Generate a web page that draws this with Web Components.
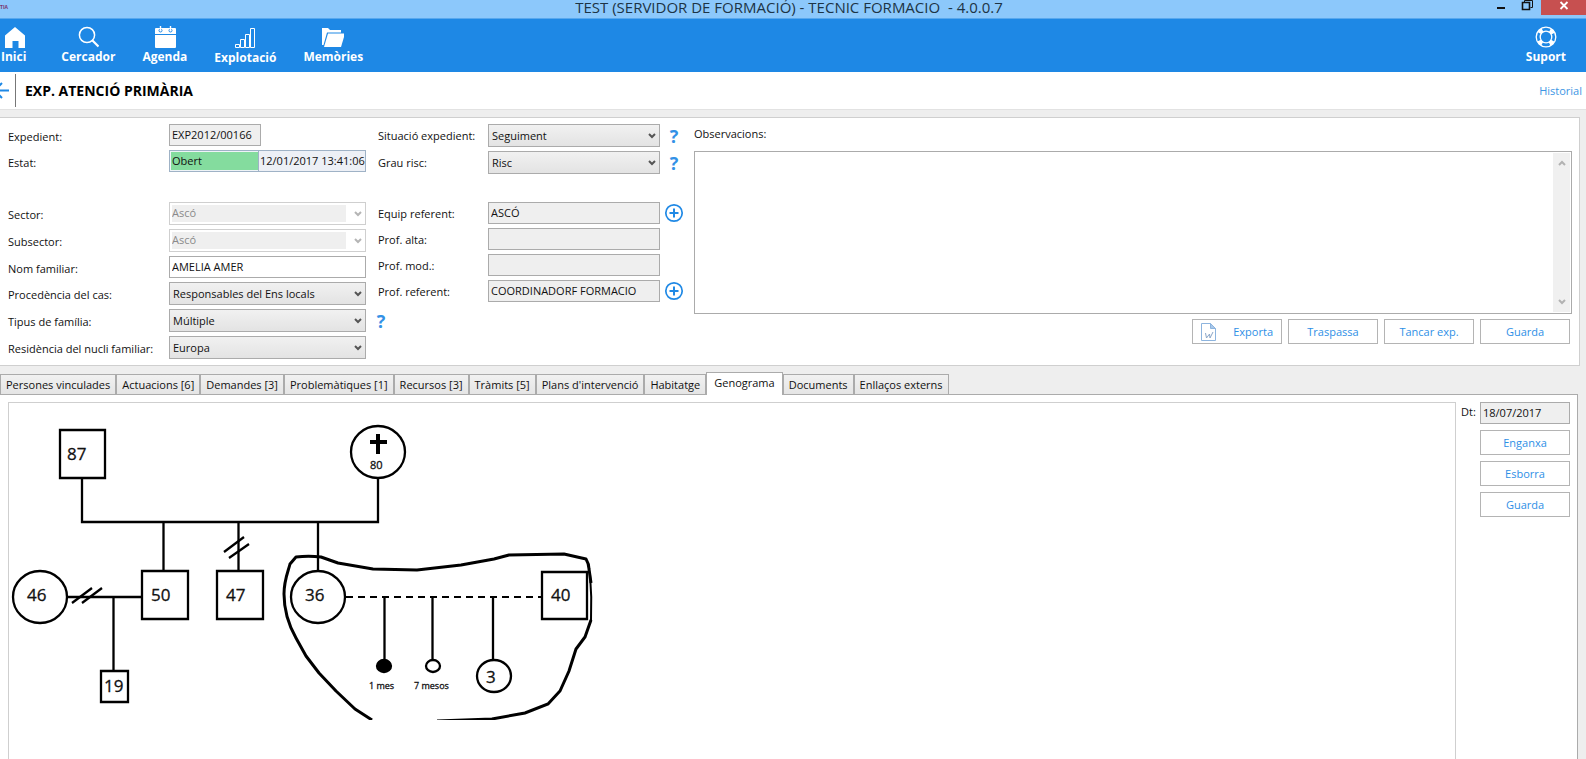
<!DOCTYPE html>
<html lang="ca">
<head>
<meta charset="utf-8">
<title>TECNIC FORMACIO</title>
<style>
  html, body { margin: 0; }
  body {
    --blue: #1e88e5;
    --line: #ababab;
    --soft: #cfcfcf;
    --fill: #efefef;
    font: 11px/16px "Open Sans", "Noto Sans", sans-serif;
    color: #111;
    background: #eee;
    overflow: hidden;
  }
</style>
</head>
<body>
<case-app></case-app>

<script>
const define = (name, html) => {
  const template = document.createElement('template');
  template.innerHTML = html;
  customElements.define(name, class extends HTMLElement {
    constructor() {
      super();
      this.attachShadow({ mode: 'open' }).append(template.content.cloneNode(true));
    }
  });
};

define('title-bar', `
<style>
  :host { display: grid; grid-template-columns: 106px 1fr 114px; height: 18px; background: #8cc8fb; border-bottom: 1px solid #58a8ee; color: #1d3445; }
  .mark { font-size: 5px; line-height: 14px; color: #7a3470; font-weight: 700; }
  .title { margin: 0; font: 400 15px/15px "Open Sans", sans-serif; text-align: center; white-space: pre; }
  .controls { display: flex; }
  button { border: 0; padding: 0; background: none; display: block; height: 15px; }
  svg { display: block; }
  .min { width: 34px; } .max { width: 35px; } .close { width: 45px; background: #c75050; }
</style>
<span class="mark">TIA</span>
<h1 class="title">TEST (SERVIDOR DE FORMACIÓ) - TECNIC FORMACIO  - 4.0.0.7</h1>
<div class="controls">
  <button class="min" aria-label="Minimitza"><svg width="34" height="15"><rect x="25" y="7" width="8" height="2" fill="#111"/></svg></button>
  <button class="max" aria-label="Restaura"><svg width="35" height="15" fill="none" stroke="#111"><path d="M18.500 2V.5h8v7h-2"/><path d="M16.500 2.500h7v7h-7z" stroke-width="1.600"/></svg></button>
  <button class="close" aria-label="Tanca"><svg width="45" height="15"><path d="M19.500 2l7 7M26.500 2l-7 7" stroke="#fff" stroke-width="1.800"/></svg></button>
</div>`);

define('tool-item', `
<style>
  :host { display: block; color: #fff; }
  a { display: flex; flex-direction: column; align-items: center; color: inherit; text-decoration: none; font-size: 12px; font-weight: 700; line-height: 16px; }
  ::slotted(svg) { display: block; width: 22px; height: 22px; margin-bottom: 1px; }
</style>
<a href="#"><slot name="icon"></slot><slot></slot></a>`);

define('tool-bar', `
<style>
  :host { display: flex; justify-content: space-between; height: 46px; padding: 7px 20px 0 1px; background: var(--blue); }
  nav { display: flex; gap: 27px; }
  .home { margin-right: 8px; }
  .chart { margin-top: 1px; }
</style>
<nav>
  <tool-item class="home"><svg slot="icon" viewBox="0 0 22 22"><path fill="#fff" d="M12 1 22 9.500V22h-6.500v-7h-6v7H2V9.500z"/></svg>Inici</tool-item>
  <tool-item><svg slot="icon" viewBox="0 0 22 22" fill="none" stroke="#fff"><circle cx="10" cy="9" r="7.600" stroke-width="1.500"/><path d="m15.500 14.500 6 6" stroke-width="2.200"/></svg>Cercador</tool-item>
  <tool-item><svg slot="icon" viewBox="0 0 22 22"><path fill="#fff" d="M2 2h19q1 0 1 1v5H1V3q0-1 1-1zM1 9h21v12q0 1-1 1H2q-1 0-1-1z"/><g fill="#fff" stroke="#1e88e5" stroke-width="1"><circle cx="6.500" cy="4.500" r="1.500"/><circle cx="16.500" cy="4.500" r="1.500"/></g><path d="M6.500 0v4.500M16.500 0v4.500" stroke="#fff" stroke-width="1.400"/></svg>Agenda</tool-item>
  <tool-item class="chart"><svg slot="icon" viewBox="0 0 22 22" fill="none" stroke="#fff" stroke-width="1"><path d="M1.500 17.500h4v3h-4zM6.500 12.500h4v8h-4zM11.500 7.500h4v13h-4zM16.500 1.500h4v19h-4z"/></svg>Explotació</tool-item>
  <tool-item><svg slot="icon" viewBox="0 0 22 22"><path fill="#fff" d="M0 2h6l2 2h11v2.500H5L1.500 19H0z"/><path fill="#fff" d="M6 7.500h17L19 21H2z"/></svg>Memòries</tool-item>
</nav>
<tool-item><svg slot="icon" viewBox="0 0 22 22" fill="none" stroke="#fff"><circle cx="11" cy="11" r="9.800" stroke-width="1.300"/><circle cx="11" cy="11" r="5.800" stroke-width="1.300"/><circle cx="11" cy="11" r="7.800" stroke-width="4" stroke-dasharray="4.500 7.750" stroke-dashoffset="-3.900"/></svg>Suport</tool-item>`);

define('page-header', `
<style>
  :host { display: flex; align-items: center; height: 37px; background: #fff; border-bottom: 1px solid #e2e2e2; }
  .back { display: block; border: 0; padding: 0; background: none; width: 15px; height: 33px; }
  svg { display: block; }
  h2 { flex: 1; margin: 0; border-left: 1px solid #777; padding-left: 9px; font: 700 14px/33px "Open Sans", sans-serif; color: #000; }
  a { color: #3d96e4; text-decoration: none; margin-right: 4px; }
</style>
<button class="back" aria-label="Enrere"><svg width="15" height="33" fill="none" stroke="#1e88e5" stroke-width="2"><path d="M9 16.500H-5M2 9l-7.500 7.500L2 24"/></svg></button>
<h2>EXP. ATENCIÓ PRIMÀRIA</h2>
<a href="#">Historial</a>`);

define('action-button', `
<style>
  :host { display: block; width: 90px; }
  button { box-sizing: border-box; display: flex; align-items: center; justify-content: center; width: 100%; height: 25px; padding: 0 8px; border: 1px solid #b4b4b4; background: #fff; color: #2e8fe6; font: inherit; }
  ::slotted(svg) { margin-right: auto; }
</style>
<button type="button"><slot name="icon"></slot><slot></slot></button>`);

define('help-button', `
<style>
  :host { display: block; }
  button { display: block; width: 14px; height: 22px; padding: 0; border: 0; background: none; color: #3391e6; font: 700 18px/24px "Open Sans", sans-serif; text-align: center; }
</style>
<button type="button" aria-label="Ajuda">?</button>`);

define('add-button', `
<style>
  :host { display: block; }
  button { display: block; width: 20px; height: 22px; padding: 0; border: 0; background: none; }
  svg { display: block; }
</style>
<button type="button" aria-label="Afegeix"><svg width="20" height="22" fill="none" stroke="#2089e5"><circle cx="10" cy="11" r="8.200" stroke-width="1.700"/><path d="M5.500 11h9M10 6.500v9" stroke-width="2"/></svg></button>`);

const chevron = '<svg width="8" height="6" fill="none" stroke="currentColor" stroke-width="2"><path d="m1 1 3 3 3-3"/></svg>';

define('case-form', `
<style>
  :host { display: flex; margin: 7px 6px 0 0; padding: 6px 7px 6px 8px; background: #fff; border: 1px solid var(--soft); border-left: 0; }
  form { display: contents; }
  .left, .mid { display: grid; align-items: start; flex: none; }
  .left { grid-template-columns: 161px 197px 12px; grid-template-rows: 26px 26px 26px 27px 27px 26px 27px 27px 23px; }
  .mid { grid-template-columns: 110px 172px 28px; grid-template-rows: 27px 51px 26px 26px 26px 22px; align-content: start; justify-items: start; margin-right: 6px; }
  .mid > help-button, .mid > add-button { justify-self: center; }
  label { padding-top: 5px; line-height: 16px; }
  .mid label { padding-top: 4px; }
  .gap { grid-column: 1 / -1; }
  input, select { box-sizing: border-box; display: block; width: 100%; margin: 0; padding: 0 2px 2px; height: 22px; border: 1px solid var(--line); border-radius: 0; background: var(--fill); color: #111; font: inherit; }
  select { appearance: none; padding: 0 3px; height: 23px; background: linear-gradient(#f1f1f1, #e3e3e3); }
  .pick { position: relative; width: 100%; }
  .pick svg { position: absolute; right: 4px; top: 9px; color: #555; }
  .short { width: 92px; }
  .plain { background: #fff; }
  .off select { color: #8a8a8a; opacity: 1; background: linear-gradient(var(--fill), var(--fill)) 2px 2px / 174px 17px no-repeat #fff; border-color: var(--soft); padding: 0 2px 2px; }
  .off svg { color: #b5b5b5; }
  .state { display: flex; box-sizing: border-box; height: 22px; border: 1px solid #9fb2c6; }
  .state input { height: 20px; }
  .state .open { flex: none; width: 88px; background: #84dc9e; border-color: #eef3f7; border-right: 0; padding: 0 1px 1px; }
  .state .date { flex: 1; min-width: 0; border: 0; border-left: 1px solid #9fb2c6; padding: 0 0 1px 1px; background: #edf0f6; }
  .help { margin-left: 8px; }
  .notes { flex: 1; display: flex; flex-direction: column; min-width: 0; }
  .notes label { height: 27px; box-sizing: border-box; padding-top: 2px; }
  .memo { display: flex; height: 161px; border: 1px solid var(--line); }
  textarea { flex: 1; border: 0; padding: 2px; margin: 0; resize: none; font: inherit; background: #fff; overflow: hidden; }
  .bar { display: flex; flex-direction: column; justify-content: space-between; align-items: center; width: 17px; box-sizing: border-box; padding: 7px 0; margin: 1px; background: #f0f0f0; color: #b2b2b2; }
  .actions { display: flex; justify-content: flex-end; gap: 6px; padding: 5px 2px 0 0; }
</style>
<form>
<div class="left">
  <label for="exp">Expedient:</label><input class="short" id="exp" value="EXP2012/00166" readonly><span></span>
  <label for="st">Estat:</label><div class="state"><input class="open" id="st" value="Obert" readonly><input class="date" aria-label="Data estat" value="12/01/2017 13:41:06" readonly></div><span></span>
  <div class="gap"></div>
  <label for="sec">Sector:</label><div class="pick off"><select id="sec" disabled><option>Ascó</option></select>${chevron}</div><span></span>
  <label for="sub">Subsector:</label><div class="pick off"><select id="sub" disabled><option>Ascó</option></select>${chevron}</div><span></span>
  <label for="nom">Nom familiar:</label><input class="plain" id="nom" value="AMELIA AMER"><span></span>
  <label for="pro">Procedència del cas:</label><div class="pick"><select id="pro"><option>Responsables del Ens locals</option></select>${chevron}</div><span></span>
  <label for="tip">Tipus de família:</label><div class="pick"><select id="tip"><option>Múltiple</option></select>${chevron}</div><help-button class="help"></help-button>
  <label for="res">Residència del nucli familiar:</label><div class="pick"><select id="res"><option>Europa</option></select>${chevron}</div><span></span>
</div>
<div class="mid">
  <label for="sit">Situació expedient:</label><div class="pick"><select id="sit"><option>Seguiment</option></select>${chevron}</div><help-button></help-button>
  <label for="gra">Grau risc:</label><div class="pick"><select id="gra"><option>Risc</option></select>${chevron}</div><help-button></help-button>
  <label for="eq">Equip referent:</label><input id="eq" value="ASCÓ" readonly><add-button></add-button>
  <label for="alta">Prof. alta:</label><input id="alta" readonly><span></span>
  <label for="mod">Prof. mod.:</label><input id="mod" readonly><span></span>
  <label for="ref">Prof. referent:</label><input id="ref" value="COORDINADORF FORMACIO" readonly><add-button></add-button>
</div>
<div class="notes">
  <label for="obs">Observacions:</label>
  <div class="memo"><textarea id="obs"></textarea><div class="bar"><svg width="8" height="6" fill="none" stroke="currentColor" stroke-width="2"><path d="m1 5 3-3 3 3"/></svg>${chevron}</div></div>
  <div class="actions">
    <action-button><svg slot="icon" width="15" height="18" fill="none" stroke="#8db4de"><path d="M.5.5h9l5 5v12H.5z"/><path d="M9.500.5v5h5z" fill="#a9c8ea"/><path d="m4.500 10 1 5 3-4 .5 4 3-6" stroke="#8aa6c8"/></svg>Exporta</action-button>
    <action-button>Traspassa</action-button>
    <action-button>Tancar exp.</action-button>
    <action-button>Guarda</action-button>
  </div>
</div>
</form>`);

define('tab-strip', `
<style>
  :host { display: flex; align-items: flex-end; height: 28px; }
  button { box-sizing: border-box; height: 20px; padding: 1px 5px 0; border: 1px solid var(--line); border-bottom: 0; background: linear-gradient(#f1f1f1, #e5e5e5); color: #111; font: inherit; white-space: nowrap; }
  .on { height: 23px; margin-bottom: -1px; padding: 0 7px 3px; background: #fff; position: relative; }
</style>
<button>Persones vinculades</button><button>Actuacions [6]</button><button>Demandes [3]</button><button>Problemàtiques [1]</button><button>Recursos [3]</button><button>Tràmits [5]</button><button>Plans d'intervenció</button><button>Habitatge</button><button class="on">Genograma</button><button>Documents</button><button>Enllaços externs</button>`);

define('genogram-chart', `
<style>
  :host { display: block; }
  svg { display: block; }
  text { font-family: "Open Sans", sans-serif; font-size: 17px; fill: #111; stroke: #111; stroke-width: .3px; }
  .s { font-size: 11px; } .xs { font-size: 9px; }
</style>
<svg width="590" height="317" viewBox="9 403 590 317" fill="none" stroke="#000" stroke-width="2.300" role="img" aria-label="Genograma familiar">
  <path d="M60 430h45v48H60zM142 571h46v48h-46zM217 571h46v48h-46zM101 671h27v31h-27zM542 572h45v47h-45z"/>
  <ellipse cx="378" cy="452" rx="27" ry="26"/><ellipse cx="40" cy="597" rx="27" ry="26"/><ellipse cx="318" cy="597" rx="27" ry="26"/>
  <ellipse cx="494" cy="676" rx="17" ry="16"/><ellipse cx="433" cy="666" rx="7" ry="6"/><ellipse cx="384" cy="666" rx="7" ry="6" fill="#000"/>
  <path d="M82 478v44h296v-44M163.500 522v49M238.500 522v49M318 522v49M67 597h75M113.500 597v74M384.500 597v62M432.500 597v62M493 597v63"/>
  <path d="M346 597h196" stroke-width="2" stroke-dasharray="7 5"/>
  <path d="m224 552 20-15M229 558l20-14M72 603l20-15M82 603l20-15"/>
  <path d="M378 434v20M370 442h17" stroke-width="4"/>
  <path stroke-width="3" stroke-linejoin="round" d="M372 720 355 709 336 691 319 673 306 656 296 638C287 622 284 609 284 594c0-14 4-22 6-30l6-7c8-1 17-1 25 0l17 6 35 6 44 1 44-5 33-6 15-4 55-1 22 5q3 5 3 10l2 14"/>
  <path stroke-width="2" d="M590 574q2 23 1 47"/>
  <path stroke-width="3" d="m591 620-6 17-9 12-7 22-9 20-12 13-23 9-33 6-55 2"/>
  <text x="67" y="460">87</text><text x="27" y="601">46</text><text x="151" y="601">50</text><text x="226" y="601">47</text><text x="305" y="601">36</text><text x="551" y="601">40</text><text x="104" y="692">19</text><text x="486" y="683">3</text>
  <text class="s" x="370" y="469">80</text><text class="xs" x="369" y="689">1 mes</text><text class="xs" x="414" y="689">7 mesos</text>
</svg>`);

define('genogram-page', `
<style>
  :host { display: flex; flex: 1; margin-right: 8px; padding: 7px 7px 0 8px; background: #fff; border: 1px solid var(--line); border-width: 1px 1px 0 0; }
  .canvas { flex: 1; border: 1px solid var(--soft); border-bottom: 0; min-width: 0; overflow: hidden; }
  aside { display: grid; grid-template-columns: 18px 90px; column-gap: 1px; row-gap: 6px; margin-left: 5px; align-content: start; }
  input { box-sizing: border-box; width: 90px; height: 22px; padding: 0 2px 2px; border: 1px solid var(--line); background: var(--fill); color: #111; font: inherit; }
  label { padding-top: 2px; }
  action-button { grid-column: 2; }
</style>
<div class="canvas"><genogram-chart></genogram-chart></div>
<aside>
  <label for="dt">Dt:</label><input id="dt" value="18/07/2017" readonly>
  <action-button>Enganxa</action-button><action-button>Esborra</action-button><action-button>Guarda</action-button>
</aside>`);

define('case-app', `
<style>:host { display: flex; flex-direction: column; min-height: 100vh; }</style>
<title-bar></title-bar>
<tool-bar></tool-bar>
<page-header></page-header>
<case-form></case-form>
<tab-strip></tab-strip>
<genogram-page></genogram-page>`);
</script>
</body>
</html>
